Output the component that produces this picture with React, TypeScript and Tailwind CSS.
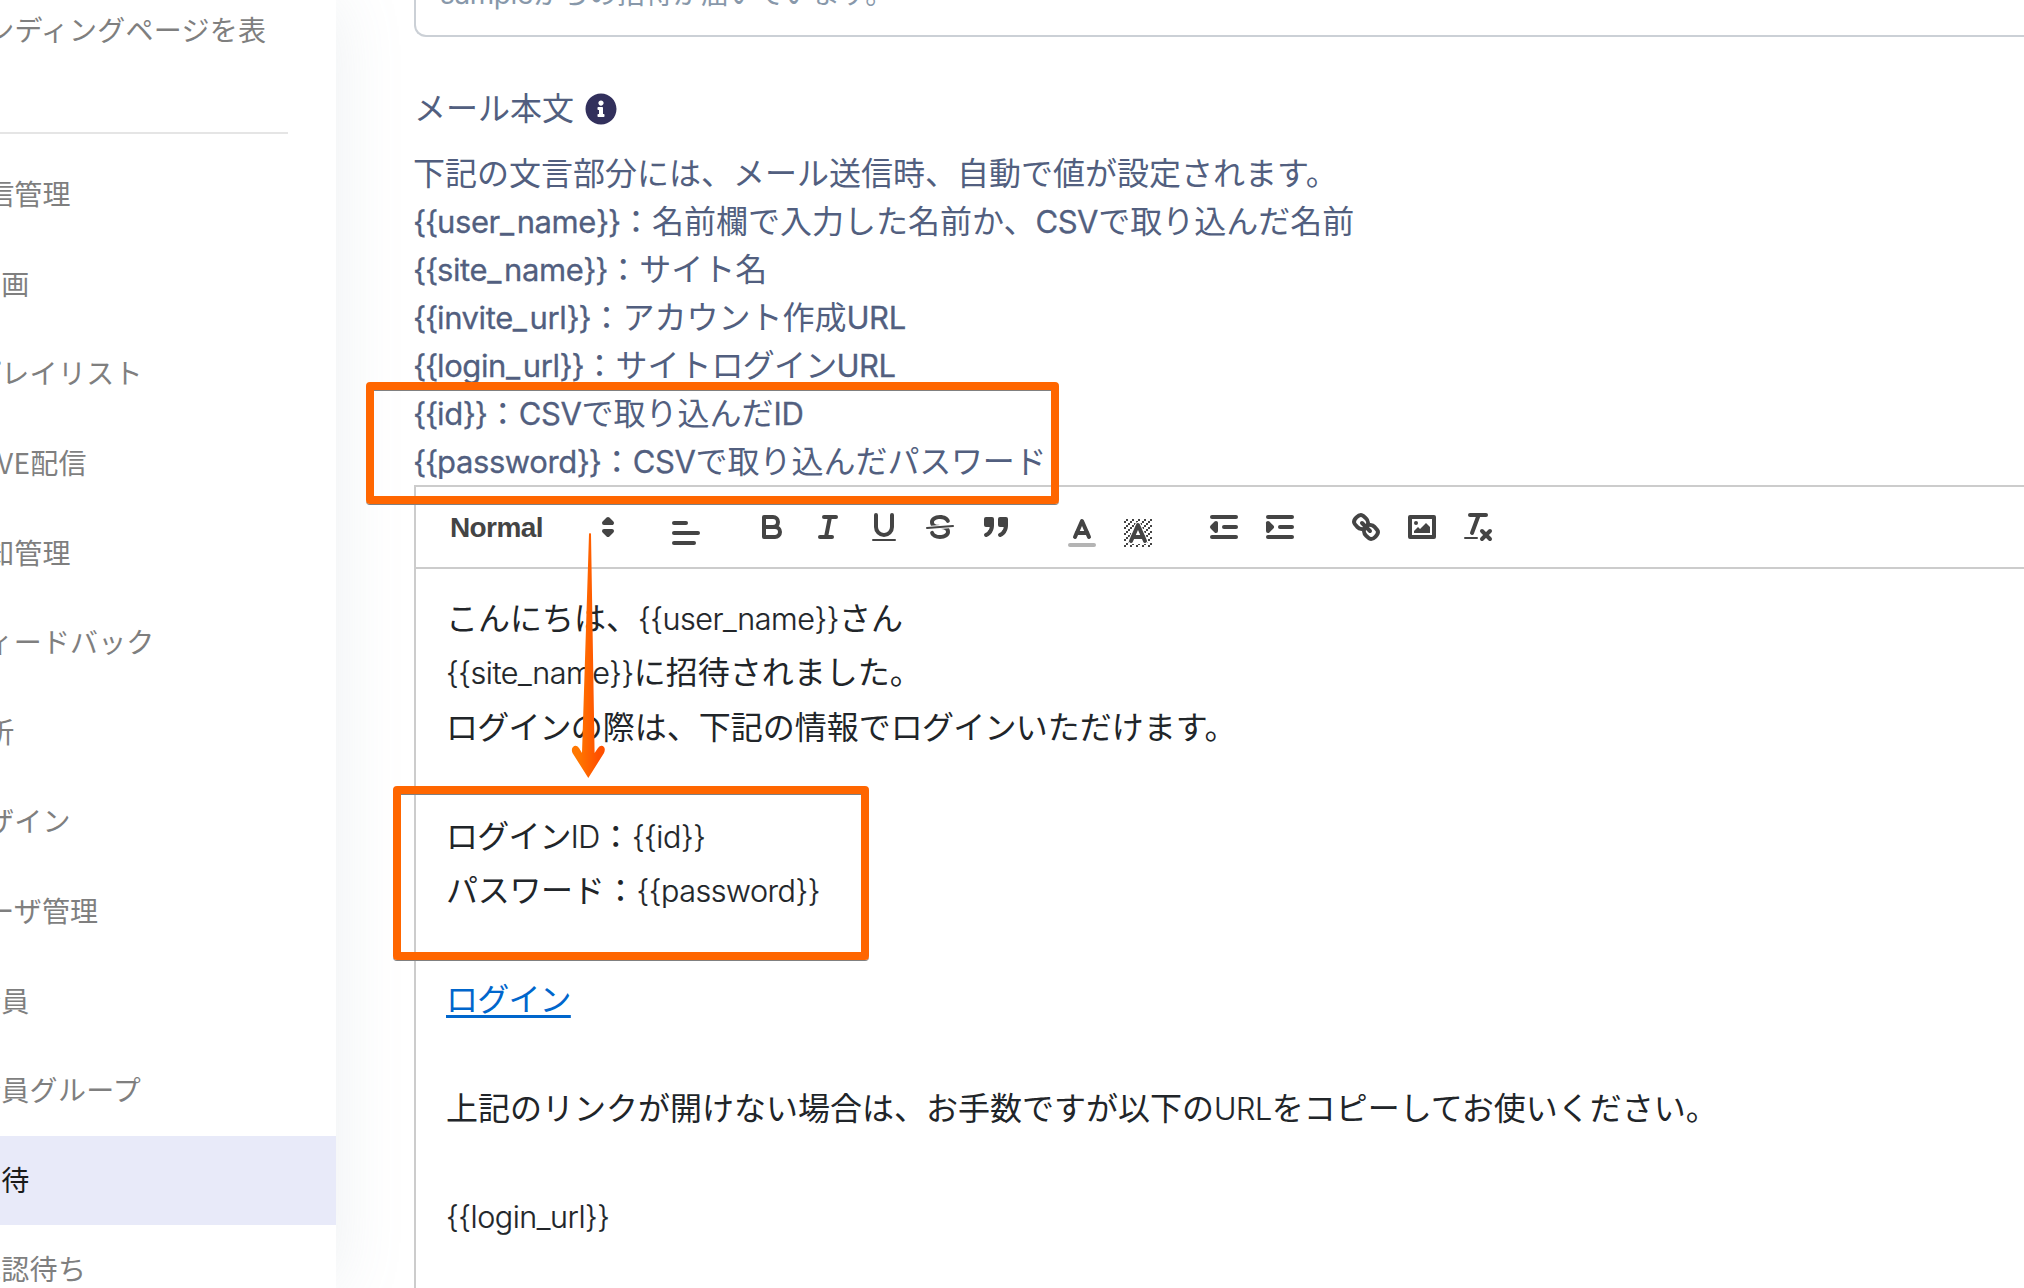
import React from "react";
import { FaInfoCircle } from "react-icons/fa";

interface MenuItem {
  label: string;
  child?: boolean;
  active?: boolean;
}

const menuItems: MenuItem[] = [
  { label: "配信管理" },
  { label: "動画", child: true },
  { label: "プレイリスト", child: true },
  { label: "LIVE配信", child: true },
  { label: "通知管理" },
  { label: "フィードバック" },
  { label: "分析" },
  { label: "デザイン" },
  { label: "ユーザ管理" },
  { label: "会員", child: true },
  { label: "会員グループ", child: true },
  { label: "招待", child: true, active: true },
  { label: "承認待ち", child: true },
];

const helpLines = [
  "下記の文言部分には、メール送信時、自動で値が設定されます。",
  "{{user_name}}：名前欄で入力した名前か、CSVで取り込んだ名前",
  "{{site_name}}：サイト名",
  "{{invite_url}}：アカウント作成URL",
  "{{login_url}}：サイトログインURL",
  "{{id}}：CSVで取り込んだID",
  "{{password}}：CSVで取り込んだパスワード",
];

const bodyLines = [
  "こんにちは、{{user_name}}さん",
  "{{site_name}}に招待されました。",
  "ログインの際は、下記の情報でログインいただけます。",
  "",
  "ログインID：{{id}}",
  "パスワード：{{password}}",
  "",
  "link:ログイン",
  "",
  "上記のリンクが開けない場合は、お手数ですが以下のURLをコピーしてお使いください。",
  "",
  "{{login_url}}",
];

// Braces sit closer together and the underscore gets more room than letters
const Placeholder = ({ text }: { text: string }) => (
  <>
    {text.split(/(\{\{|\}\}|_)/).map((part, index) => {
      if (index % 2 === 0) return part;
      return (
        <span
          key={index}
          className={part === "_" ? "tracking-[2.6px]" : "tracking-[-1.2px]"}
        >
          {part}
        </span>
      );
    })}
  </>
);

// Latin runs get their own font settings, katakana words are set a bit tighter
const MixedText = ({
  text,
  latin,
  tightBraces,
}: {
  text: string;
  latin: string;
  tightBraces?: boolean;
}) => (
  <>
    {text.split(/([\x20-\x7e]+|ログイン|パスワード)/).map((part, index) => {
      if (index % 2 === 0) return part;
      if (part === "ログイン") {
        return (
          <span key={index} className="tracking-[-0.8px]">
            {part}
          </span>
        );
      }
      if (part === "パスワード") {
        return (
          <span key={index} className="tracking-[-0.3px]">
            {part}
          </span>
        );
      }
      return (
        <span key={index} className={latin}>
          {tightBraces ? <Placeholder text={part} /> : part}
        </span>
      );
    })}
  </>
);

const Icon = ({ children }: { children: React.ReactNode }) => (
  <svg
    viewBox="0 0 18 18"
    className="h-9 w-9"
    fill="none"
    stroke="#444"
    strokeWidth={2}
    strokeLinecap="round"
    strokeLinejoin="round"
  >
    {children}
  </svg>
);

const ToolButton = ({
  label,
  picker,
  children,
}: {
  label: string;
  picker?: boolean;
  children: React.ReactNode;
}) => (
  <button
    aria-label={label}
    className={
      picker
        ? "flex h-12 w-14 items-center justify-center pt-3"
        : "flex h-12 w-14 items-center justify-center"
    }
  >
    <Icon>{children}</Icon>
  </button>
);

const fillOnly = { fill: "#444", stroke: "none" };

// Diagonal dot pattern behind the letter of the background colour icon
const hatch: { x: number; y: number }[] = [];
for (let x = 2; x < 16; x++) {
  for (let y = 2; y < 16; y++) {
    if ((x + y) % 3 === 2) hatch.push({ x, y });
  }
}

const Toolbar = () => (
  <div className="flex h-[82px] items-center gap-[30px] border-b-2 border-[#ccc] px-4">
    <div className="flex w-[196px] items-center justify-between pl-[18px] pr-[2px] font-['Liberation_Sans',sans-serif] text-[28px] font-bold tracking-[-0.6px] text-[#444]">
      <span className="pt-[2px]">Normal</span>
      <Icon>
        <polygon points="7 11 9 13 11 11 7 11" fill="#444" />
        <polygon points="7 7 9 5 11 7 7 7" fill="#444" />
      </Icon>
    </div>
    <div className="flex">
      <ToolButton label="align" picker>
        <line x1="3" x2="15" y1="9" y2="9" />
        <line x1="3" x2="13" y1="14" y2="14" />
        <line x1="3" x2="9" y1="4" y2="4" />
      </ToolButton>
    </div>
    <div className="flex">
      <ToolButton label="bold">
        <path d="M5,4H9.5A2.5,2.5,0,0,1,12,6.5v0A2.5,2.5,0,0,1,9.5,9H5V4Z" />
        <path d="M5,9h5.5A2.5,2.5,0,0,1,13,11.5v0A2.5,2.5,0,0,1,10.5,14H5V9Z" />
      </ToolButton>
      <ToolButton label="italic">
        <line x1="7" x2="13" y1="4" y2="4" />
        <line x1="5" x2="11" y1="14" y2="14" />
        <line x1="8" x2="10" y1="14" y2="4" />
      </ToolButton>
      <ToolButton label="underline">
        <path d="M5,3V9a4.012,4.012,0,0,0,4,4H9a4.012,4.012,0,0,0,4-4V3" />
        <rect {...fillOnly} height="1" rx="0.5" width="12" x="3" y="15" />
      </ToolButton>
      <ToolButton label="strike">
        <line strokeWidth={1} x1="15.5" x2="2.5" y1="8.5" y2="9.5" />
        <path
          {...fillOnly}
          d="M9.007,8C6.542,7.791,6,7.519,6,6.5,6,5.792,7.283,5,9,5c1.571,0,2.765.679,2.969,1.309a1,1,0,0,0,1.9-.617C13.356,4.106,11.354,3,9,3,6.2,3,4,4.538,4,6.5a3.2,3.2,0,0,0,.5,1.843Z"
        />
        <path
          {...fillOnly}
          d="M8.984,10C11.457,10.208,12,10.479,12,11.5c0,0.708-1.283,1.5-3,1.5-1.571,0-2.765-.679-2.969-1.309a1,1,0,1,0-1.9.617C4.644,13.894,6.646,15,9,15c2.8,0,5-1.538,5-3.5a3.2,3.2,0,0,0-.5-1.843Z"
        />
      </ToolButton>
      <ToolButton label="blockquote">
        <rect fill="#444" height="3" width="3" x="4" y="5" />
        <rect fill="#444" height="3" width="3" x="11" y="5" />
        <path fill="#444" d="M7,8c0,4.031-3,5-3,5" />
        <path fill="#444" d="M14,8c0,4.031-3,5-3,5" />
      </ToolButton>
    </div>
    <div className="flex">
      <ToolButton label="color" picker>
        <line opacity={0.4} x1="3" x2="15" y1="15" y2="15" />
        <polyline points="5.5 11 9 3 12.5 11" />
        <line x1="11.63" x2="6.38" y1="9" y2="9" />
      </ToolButton>
      <ToolButton label="background" picker>
        <mask id="letter-gap" maskUnits="userSpaceOnUse" x="0" y="0" width="18" height="18">
          <rect width="18" height="18" fill="#fff" stroke="none" />
          <polygon points="5.5 13 9 5 12.5 13" fill="#000" stroke="#000" strokeWidth={3} />
        </mask>
        <g {...fillOnly} mask="url(#letter-gap)">
          {hatch.map(({ x, y }) => (
            <rect key={`${x}-${y}`} x={x} y={y} width="1" height="1" />
          ))}
        </g>
        <polyline points="5.5 13 9 5 12.5 13" />
        <line x1="11.63" x2="6.38" y1="11" y2="11" />
      </ToolButton>
    </div>
    <div className="flex">
      <ToolButton label="outdent">
        <line x1="3" x2="15" y1="14" y2="14" />
        <line x1="3" x2="15" y1="4" y2="4" />
        <line x1="9" x2="15" y1="9" y2="9" />
        <polyline fill="#444" points="5 7 5 11 3 9 5 7" />
      </ToolButton>
      <ToolButton label="indent">
        <line x1="3" x2="15" y1="14" y2="14" />
        <line x1="3" x2="15" y1="4" y2="4" />
        <line x1="9" x2="15" y1="9" y2="9" />
        <polyline fill="#444" points="3 7 3 11 5 9 3 7" />
      </ToolButton>
    </div>
    <div className="flex">
      <ToolButton label="link">
        <line x1="7" x2="11" y1="7" y2="11" />
        <path d="M8.9,4.577a3.476,3.476,0,0,1,.36,4.679A3.476,3.476,0,0,1,4.577,8.9C3.185,7.5,2.035,6.4,4.217,4.217S7.5,3.185,8.9,4.577Z" />
        <path d="M13.423,9.1a3.476,3.476,0,0,0-4.679-.36,3.476,3.476,0,0,0,.36,4.679c1.392,1.392,2.5,2.542,4.679.36S14.815,10.5,13.423,9.1Z" />
      </ToolButton>
      <ToolButton label="image">
        <rect height="10" width="12" x="3" y="4" />
        <circle {...fillOnly} cx="6" cy="7" r="1" />
        <polyline {...fillOnly} points="5 12 5 11 7 9 8 10 11 7 13 9 13 12 5 12" />
      </ToolButton>
      <ToolButton label="clean">
        <line x1="5" x2="13" y1="3" y2="3" />
        <line x1="6" x2="9.35" y1="12" y2="3" />
        <line x1="11" x2="15" y1="11" y2="15" />
        <line x1="15" x2="11" y1="11" y2="15" />
        <rect {...fillOnly} height="1" rx="0.5" width="7" x="2" y="14" />
      </ToolButton>
    </div>
  </div>
);

const Sidebar = () => (
  <nav className="h-full w-[336px] shrink-0 font-['Noto_Sans_CJK_JP',sans-serif] text-[28px] text-[#7f7f7f] shadow-[0_0_64px_rgba(136,152,170,0.15)]">
    <div className="h-[132px] overflow-hidden">
      <p className="-ml-[42px] mt-[8px] whitespace-nowrap leading-[42px] tracking-[0.25px]">
        ランディングページを表
      </p>
    </div>
    <hr className="mb-[16px] w-[288px] border-t-2 border-[#e5e5e5]" />
    <ul>
      {menuItems.map((item) => (
        <li
          key={item.label}
          className={
            item.active
              ? "flex h-[89.6px] items-center overflow-hidden bg-[#e8eaf9] pb-[3px] text-[#1a1a1a]"
              : "flex h-[89.6px] items-center overflow-hidden pb-[3px]"
          }
        >
          <span
            className={
              item.child
                ? "-ml-[27px] whitespace-nowrap tracking-[0.3px]"
                : "-ml-[42px] whitespace-nowrap tracking-[0.15px]"
            }
          >
            {item.label}
          </span>
        </li>
      ))}
    </ul>
  </nav>
);

const InvitePage = () => {
  return (
    <div className="relative flex h-[1288px] w-[2024px] overflow-hidden bg-white font-['Liberation_Sans','Noto_Sans_CJK_JP',sans-serif]">
      <Sidebar />

      <main className="min-w-0 flex-1 pl-[78px]">
        {/* Subject field */}
        <div className="h-[37px] overflow-hidden rounded-bl-[12px] border-b-2 border-l-2 border-[#cbd0d6] pl-6">
          <p className="-mt-[22px] text-[28px] leading-[32px] text-[#8898aa]">
            <MixedText
              text="sampleからの招待が届いています。"
              latin="font-['Inter',sans-serif] tracking-[-0.4px]"
            />
          </p>
        </div>

        {/* Mail body label and help */}
        <div className="mt-12 flex h-12 items-center gap-[11px] text-[32px] text-[#525f7f]">
          メール本文
          <FaInfoCircle className="text-[#32305c]" />
        </div>
        <div className="-ml-px mb-[-1px] mt-[17px] text-[32px] leading-[48px] text-[#525f7f]">
          {helpLines.map((line) => (
            <p key={line} className="h-12 whitespace-nowrap">
              <MixedText
                text={line}
                latin="font-['Inter',sans-serif] text-[31px] tracking-[-0.4px] [-webkit-text-stroke:0.3px_#525f7f]"
                tightBraces
              />
            </p>
          ))}
        </div>

        {/* Editor */}
        <div className="border-l-2 border-t-2 border-[#ccc]">
          <Toolbar />
          <div className="h-[730px] px-[30px] py-[23px] text-[32px] text-[#212529]">
            {bodyLines.map((line, index) => (
              <p key={index} className="h-[54.4px] whitespace-nowrap leading-[54.4px]">
                {line.startsWith("link:") ? (
                  <a className="tracking-[-0.8px] text-[#0066cc] underline decoration-[3px] underline-offset-[4px]">
                    {line.slice(5)}
                  </a>
                ) : (
                  <MixedText
                    text={line}
                    latin="font-['Inter',sans-serif] text-[30.5px] font-light tracking-[-0.45px] [-webkit-text-stroke:0.2px_#212529]"
                  />
                )}
              </p>
            ))}
          </div>
        </div>
      </main>

      {/* Highlights */}
      <div className="absolute left-[366px] top-[382px] h-[122px] w-[693px] rounded-[4px] border-8 border-[#ff6600] shadow-[0_1px_0_#808080,inset_0_1px_0_#808080]" />
      <div className="absolute left-[393px] top-[786px] h-[174px] w-[476px] rounded-[4px] border-8 border-[#ff6600] shadow-[0_1px_0_#808080,inset_0_1px_0_#808080]" />
      <svg className="absolute left-[570px] top-[530px]" width="38" height="250" viewBox="0 0 38 250">
        <defs>
          <linearGradient id="arrow" x1="0" x2="1" y1="0" y2="0">
            <stop offset="0.2" stopColor="#ff7700" />
            <stop offset="0.8" stopColor="#ff5000" />
          </linearGradient>
        </defs>
        <path
          d="M19,4 Q20,2 21,4 L24.6,223 L28,218 Q31,214 34,217 Q35.6,219 34,223 L18.3,248 L2.5,223 Q1,219 3,217 Q6,214 9,218 L12,223 Z"
          fill="url(#arrow)"
        />
      </svg>
    </div>
  );
};

export default InvitePage;
